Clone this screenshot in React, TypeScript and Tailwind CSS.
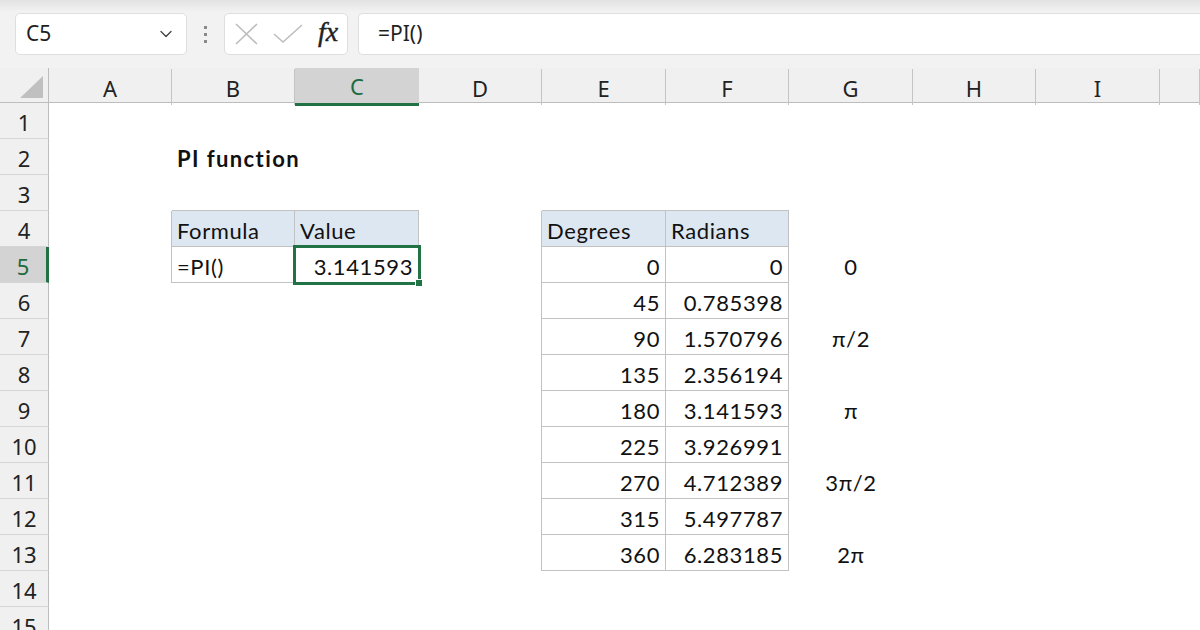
import { ChevronDown } from "lucide-react";

const COLS = ["A", "B", "C", "D", "E", "F", "G", "H", "I", ""];
const ROWS = Array.from({ length: 15 }, (_, i) => i + 1);

// same column template for the header strip and every sheet row
const GRID =
  "grid grid-cols-[49px_123px_123px_124px_123px_124px_123px_124px_123px_124px_1fr]";

type Cell = { text: string; align: "left" | "right" | "center"; bold?: boolean };

const degrees = [0, 45, 90, 135, 180, 225, 270, 315, 360];
const radians = ["0", "0.785398", "1.570796", "2.356194", "3.141593", "3.926991", "4.712389", "5.497787", "6.283185"];
const gNotes: Record<number, string> = { 5: "0", 7: "π/2", 9: "π", 11: "3π/2", 13: "2π" };

const cells: Record<string, Cell> = {
  B2: { text: "PI function", align: "left", bold: true },
  B4: { text: "Formula", align: "left" },
  C4: { text: "Value", align: "left" },
  B5: { text: "=PI()", align: "left" },
  C5: { text: "3.141593", align: "right" },
  E4: { text: "Degrees", align: "left" },
  F4: { text: "Radians", align: "left" },
};
degrees.forEach((d, i) => {
  cells[`E${i + 5}`] = { text: String(d), align: "right" };
  cells[`F${i + 5}`] = { text: radians[i], align: "right" };
});
Object.entries(gNotes).forEach(([r, t]) => {
  cells[`G${r}`] = { text: t, align: "center" };
});

// c: 1 = A ... 9 = I
const inTable = (r: number, c: number) =>
  (r >= 4 && r <= 5 && c >= 2 && c <= 3) || (r >= 4 && r <= 13 && c >= 5 && c <= 6);

const borderClass = (r: number, c: number) => {
  const right = inTable(r, c) || inTable(r, c + 1);
  const bottom = inTable(r, c) || inTable(r + 1, c);
  if (right && bottom) return "border-r border-b border-[#c2c2c2]";
  if (right) return "border-r border-[#c2c2c2]";
  if (bottom) return "border-b border-[#c2c2c2]";
  return "";
};

const alignClass = { left: "justify-start pl-[5px]", right: "justify-end pr-[5px]", center: "justify-center" };

function SheetCell({ r, c }: { r: number; c: number }) {
  const key = `${COLS[c - 1]}${r}`;
  const cell = cells[key];
  const header = r === 4 && inTable(r, c);
  const selected = key === "C5";
  return (
    <div
      className={`relative flex h-[36px] pt-[4px] leading-[32px] ${borderClass(r, c)} ${header ? "bg-[#dde7f1]" : ""} ${
        cell ? alignClass[cell.align] : ""
      }`}
    >
      {cell && (
        <span className={`whitespace-nowrap ${cell.bold ? "font-bold tracking-[1.4px]" : ""}`}>{cell.text}</span>
      )}
      {selected && (
        <div className="absolute -left-[2px] -top-[2px] -right-[3px] -bottom-[3px] border-[3px] border-[#217346]">
          <div className="absolute -right-[5px] -bottom-[5px] w-[8px] h-[8px] bg-[#217346] border border-white" />
        </div>
      )}
    </div>
  );
}

function Toolbar() {
  return (
    <div className="flex items-start h-[68px] pt-[13px] pl-[15px] bg-[linear-gradient(#e3e3e3,#f2f2f2_12px)]">
      {/* name box */}
      <div className="flex items-center justify-between w-[172px] h-[42px] pl-[10px] pr-[10px] bg-white border border-[#dedede] rounded-[5px]">
        <span className="text-[21px] text-[#1f1f1f]">C5</span>
        <ChevronDown className="w-[20px] h-[20px] text-[#444]" strokeWidth={1.6} />
      </div>
      <div className="flex flex-col items-center justify-center gap-[4px] w-[37px] h-[42px]">
        <span className="w-[3px] h-[3px] bg-[#8a8a8a]" />
        <span className="w-[3px] h-[3px] bg-[#8a8a8a]" />
        <span className="w-[3px] h-[3px] bg-[#8a8a8a]" />
      </div>
      {/* cancel / enter / insert function */}
      <div className="flex items-center w-[124px] h-[42px] pl-[10px] bg-white border border-[#dedede] rounded-[5px]">
        <svg width="23" height="22" viewBox="0 0 23 22" fill="none" stroke="#bdbdbd" strokeWidth="1.6">
          <path d="M1 1L22 21M22 1L1 21" />
        </svg>
        <svg width="30" height="20" viewBox="0 0 30 20" fill="none" stroke="#bdbdbd" strokeWidth="1.6" className="ml-[15px]">
          <path d="M1 10L10 18L29 1" />
        </svg>
        <span className="ml-[15px] -mt-[4px] font-['Liberation_Serif',serif] italic text-[28px] text-[#222] leading-none [-webkit-text-stroke:0.4px_#222]">
          fx
        </span>
      </div>
      {/* formula bar */}
      <div className="flex items-center flex-1 h-[42px] ml-[10px] pl-[19px] bg-white border border-r-0 border-[#dedede] rounded-l-[5px]">
        <span className="text-[21px] text-[#1f1f1f]">=PI()</span>
      </div>
    </div>
  );
}

export default function App() {
  return (
    <div className="w-[1200px] h-[630px] overflow-hidden bg-white font-['Noto_Sans',sans-serif] text-[#1b1b1b]">
      <Toolbar />

      {/* column headers */}
      <div className={`${GRID} h-[35px] bg-[#f0f0f0] border-b border-[#bdbdbd]`}>
        <div className="relative border-r border-[#bdbdbd]">
          <svg width="24" height="23" viewBox="0 0 24 23" className="absolute left-[20px] top-[8px]">
            <path d="M23 0V22H0Z" fill="#c0c0c0" />
          </svg>
        </div>
        {COLS.map((l, i) =>
          l === "C" ? (
            <div
              key={i}
              className="flex items-center justify-center pt-[2px] text-[22px] text-[#1e6b40] bg-[#d3d3d3] border-b-[3px] border-[#217346] -mb-px"
            >
              {l}
            </div>
          ) : (
            <div
              key={i}
              className="flex items-center justify-center pt-[2px] text-[22px] text-[#222] border-r border-[#c4c4c4] mt-[1px]"
            >
              {l}
            </div>
          )
        )}
      </div>

      {/* sheet rows */}
      <div className="font-['Lato',sans-serif] text-[22px] tracking-[0.6px] text-[#111]">
        {ROWS.map((r) => (
          <div key={r} className={GRID}>
            {r === 5 ? (
              <div className="flex items-center justify-center h-[36px] pt-[3px] font-['Noto_Sans',sans-serif] tracking-normal text-[22px] text-[#1e6b40] bg-[#d3d3d3] border-b border-[#d6d6d6] border-r-[3px] border-r-[#217346]">
                {r}
              </div>
            ) : (
              <div className="flex items-center justify-center h-[36px] pt-[3px] font-['Noto_Sans',sans-serif] tracking-normal text-[22px] text-[#222] bg-[#f0f0f0] border-b border-[#d6d6d6] border-r border-r-[#bdbdbd]">
                {r}
              </div>
            )}
            {COLS.map((_, i) => (
              <SheetCell key={i} r={r} c={i + 1} />
            ))}
          </div>
        ))}
      </div>
    </div>
  );
}
